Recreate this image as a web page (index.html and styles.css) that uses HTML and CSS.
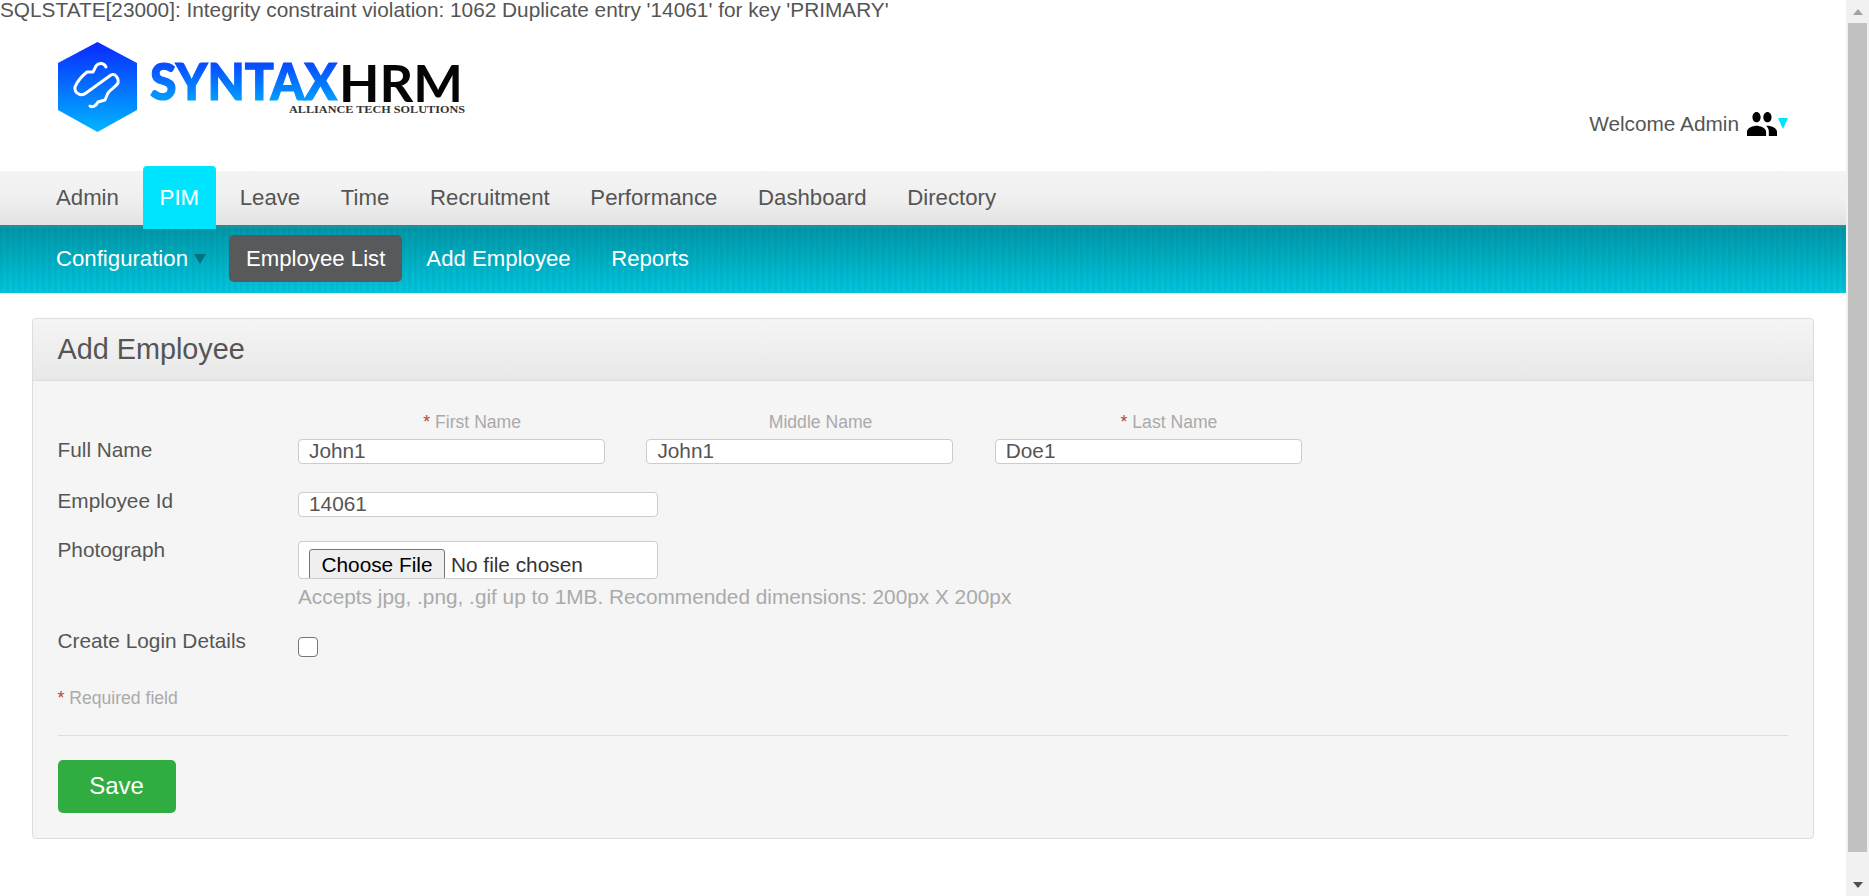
FILE: index.html
```html
<!DOCTYPE html>
<html lang="en">
<head>
    <meta charset="UTF-8">
    <meta name="viewport" content="width=device-width, initial-scale=1.0">
    <title>Add Employee</title>
    <link rel="stylesheet" href="styles.css">
</head>
<body>
    <div class="page">
        <div class="error-line">SQLSTATE[23000]: Integrity constraint violation: 1062 Duplicate entry '14061' for key 'PRIMARY'</div>
        <header class="top-header">
            <svg class="logo" viewBox="0 0 410 92" width="410" height="92" aria-label="Syntax HRM">
                <defs>
                    <linearGradient id="blue-grad" x1="0" y1="0" x2="0" y2="1">
                        <stop offset="0" stop-color="#0a28ff"/>
                        <stop offset="1" stop-color="#00b6ff"/>
                    </linearGradient>
                </defs>
                <polygon points="39.5,0 79,21 79,68 39.5,90 0,68 0,21" fill="url(#blue-grad)"/>
                <path d="M48 25 C46 21 41 20 38 24 L35 30 L29 30 C24 34 19 40 17 45 C16 51 23 55 28 51 L53 33 C57 31 61 36 60 41 C58 45 53 47 50 51 L47 58 L40 60 C38 64 34 66 32 64" fill="none" stroke="#fff" stroke-width="3" stroke-linecap="round" stroke-linejoin="round"/>
                <text class="logo-syntax" x="92" y="58" textLength="187" lengthAdjust="spacingAndGlyphs" fill="url(#blue-grad)">SYNTAX</text>
                <text class="logo-hrm" x="281" y="60" textLength="124" lengthAdjust="spacingAndGlyphs">HRM</text>
                <text class="logo-tag" x="231" y="71" textLength="176" lengthAdjust="spacingAndGlyphs">ALLIANCE TECH SOLUTIONS</text>
            </svg>
            <div class="welcome">
                <span>Welcome Admin</span>
                <svg class="people-icon" viewBox="1 5 22 14" width="30" height="24" preserveAspectRatio="none">
                    <path d="M16 11c1.66 0 2.99-1.34 2.99-3S17.66 5 16 5c-1.66 0-3 1.34-3 3s1.34 3 3 3zm-8 0c1.66 0 2.99-1.34 2.99-3S9.66 5 8 5C6.34 5 5 6.34 5 8s1.34 3 3 3zm0 2c-2.33 0-7 1.17-7 3.5V19h14v-2.5c0-2.33-4.67-3.5-7-3.5zm8 0c-.29 0-.62.02-.97.05 1.16.84 1.97 1.97 1.97 3.45V19h6v-2.5c0-2.33-4.67-3.5-7-3.5z"/>
                </svg>
                <i class="welcome-arrow"></i>
            </div>
        </header>
        <nav class="main-menu">
            <a href="#">Admin</a>
            <a href="#" class="active">PIM</a>
            <a href="#">Leave</a>
            <a href="#">Time</a>
            <a href="#">Recruitment</a>
            <a href="#">Performance</a>
            <a href="#">Dashboard</a>
            <a href="#">Directory</a>
        </nav>
        <nav class="sub-menu">
            <a href="#">Configuration<i class="sub-arrow"></i></a>
            <a href="#" class="active">Employee List</a>
            <a href="#">Add Employee</a>
            <a href="#">Reports</a>
        </nav>
        <section class="panel">
            <div class="panel-head">Add Employee</div>
            <form class="panel-body">
                <div class="form-row name-row">
                    <label class="row-label">Full Name</label>
                    <div class="name-cols">
                        <div class="name-col">
                            <div class="sub-label"><em>*</em> First Name</div>
                            <input type="text" value="John1">
                        </div>
                        <div class="name-col">
                            <div class="sub-label">Middle Name</div>
                            <input type="text" value="John1">
                        </div>
                        <div class="name-col">
                            <div class="sub-label"><em>*</em> Last Name</div>
                            <input type="text" value="Doe1">
                        </div>
                    </div>
                </div>
                <div class="form-row id-row">
                    <label class="row-label">Employee Id</label>
                    <input type="text" class="wide" value="14061">
                </div>
                <div class="form-row photo-row">
                    <label class="row-label">Photograph</label>
                    <div>
                        <input type="file" class="file-box">
                        <div class="hint">Accepts jpg, .png, .gif up to 1MB. Recommended dimensions: 200px X 200px</div>
                    </div>
                </div>
                <div class="form-row login-row">
                    <label class="row-label">Create Login Details</label>
                    <input type="checkbox" class="login-check">
                </div>
                <div class="required"><em>*</em> Required field</div>
                <hr class="divider">
                <button type="button" class="save-btn">Save</button>
            </form>
        </section>
    </div>
    <div class="scrollbar">
        <div class="scroll-btn"><i class="arrow-up"></i></div>
        <div class="scroll-thumb"></div>
        <div class="scroll-rest"></div>
        <div class="scroll-btn"><i class="arrow-down"></i></div>
    </div>
</body>
</html>
```

FILE: styles.css
```css
html, body {
    height: 100%;
}
body {
    font-family: "Liberation Sans", Arial, sans-serif;
    color: #555;
    background: #fff;
    margin: 0;
    display: flex;
    overflow: hidden;
}
.page {
    flex: 1;
    min-width: 0;
}
.error-line {
    font-size: 20.8px;
    line-height: 20px;
    height: 20px;
    white-space: nowrap;
}
.top-header {
    height: 151px;
    box-sizing: border-box;
    display: flex;
    justify-content: space-between;
    padding: 22px 58px 0 58px;
}
.logo-syntax {
    font-family: Lato, sans-serif;
    font-weight: 900;
    font-size: 52px;
    stroke: url(#blue-grad);
    stroke-width: 1.2px;
}
.logo-hrm {
    font-family: Lato, sans-serif;
    font-weight: 700;
    font-size: 52px;
    fill: #050505;
}
.logo-tag {
    font-family: "Liberation Serif", serif;
    font-weight: 700;
    font-size: 11px;
    fill: #333;
}
.welcome {
    display: flex;
    align-items: center;
    height: 24px;
    margin-top: 69px;
    font-size: 20.8px;
}
.welcome span {
    position: relative;
    top: 1px;
}
.people-icon {
    margin: 2px 0 0 8px;
    fill: #000;
}
.welcome-arrow {
    width: 0;
    height: 0;
    margin-left: 1px;
    border-left: 5px solid transparent;
    border-right: 5px solid transparent;
    border-top: 11px solid #00e5ff;
}
.main-menu {
    height: 54px;
    display: flex;
    gap: 7.7px;
    padding-left: 39px;
    background: linear-gradient(#f4f4f4, #f0f0f0 50%, #e2e2e2);
}
.main-menu a {
    position: relative;
    z-index: 2;
    height: 63px;
    margin-top: -5px;
    line-height: 64px;
    padding: 0 16.5px;
    font-size: 22.2px;
    color: #555;
    text-decoration: none;
    border-radius: 4px 4px 0 0;
}
.main-menu a:first-child {
    padding-left: 17px;
}
.main-menu a.active {
    background: #00e5ff;
    color: #fff;
}
.sub-menu {
    box-sizing: content-box;
    border-top: 3px solid #1f8f9c;
    padding-top: 7px;
    height: 58px;
    display: flex;
    align-items: flex-start;
    gap: 7.5px;
    padding-left: 39px;
    background:
        repeating-linear-gradient(90deg, rgba(0, 0, 0, 0.035) 0 3px, transparent 3px 6px),
        linear-gradient(#0097a8, #00c6de);
}
.sub-menu a {
    display: flex;
    align-items: center;
    height: 47px;
    padding: 0 16px 0 17px;
    font-size: 22.2px;
    color: #fff;
    text-decoration: none;
    border-radius: 5px;
}
.sub-menu a:first-child {
    padding-right: 17.5px;
}
.sub-menu a.active {
    background: #58595b;
    padding: 0 16.5px 0 17px;
}
.sub-arrow {
    width: 0;
    height: 0;
    margin-left: 6px;
    margin-right: -2px;
    border-left: 6px solid transparent;
    border-right: 6px solid transparent;
    border-top: 10px solid #00727f;
}
.panel {
    margin: 25px 32px 0 32px;
    background: #f5f5f5;
    border: 1px solid #ddd;
    border-radius: 4px;
}
.panel-head {
    height: 61px;
    line-height: 60px;
    padding-left: 24.5px;
    font-size: 28.8px;
    background: linear-gradient(#f5f5f5, #e8e8e8);
    border-bottom: 1px solid #ddd;
    border-radius: 4px 4px 0 0;
}
.panel-body {
    padding: 31px 25px 25px 24.5px;
}
.form-row {
    display: flex;
    align-items: flex-start;
}
.row-label {
    width: 240.5px;
    flex: none;
    font-size: 20.8px;
    line-height: 24px;
}
input[type="text"] {
    display: block;
    box-sizing: border-box;
    width: 307px;
    height: 25px;
    padding: 0 10px 2px 10px;
    margin: 0;
    font-family: inherit;
    font-size: 20.8px;
    color: #555;
    background: #fff;
    border: 1px solid #ccc;
    border-radius: 4px;
    outline: none;
}
.name-row {
    margin-bottom: 25px;
}
.name-row .row-label {
    padding-top: 26px;
}
.name-cols {
    display: grid;
    grid-template-columns: repeat(3, 348.4px);
}
.sub-label {
    font-size: 17.6px;
    line-height: 20px;
    margin-bottom: 7px;
    color: #aaa;
    text-align: center;
}
em {
    font-style: normal;
    color: #b5482a;
}
.id-row {
    margin-bottom: 21px;
}
input.wide {
    width: 360px;
    margin-top: 3px;
    padding-bottom: 1px;
}
.photo-row {
    margin-bottom: 20px;
}
.file-box {
    display: block;
    box-sizing: border-box;
    width: 360px;
    height: 38px;
    margin-top: 3px;
    padding: 7px 10px 0 10px;
    font-family: inherit;
    font-size: 20.8px;
    color: #333;
    background: #fff;
    border: 1px solid #ccc;
    border-radius: 4px;
    overflow: hidden;
}
.file-box::file-selector-button {
    padding: 3px 11.5px;
    margin-right: 6px;
    font-family: inherit;
    font-size: 20.8px;
    color: #000;
    background: #efefef;
    border: 1px solid #767676;
    border-radius: 3px;
}
.hint {
    margin-top: 6px;
    font-size: 20.8px;
    line-height: 24px;
    color: #aaa;
}
.login-row {
    margin-bottom: 31px;
}
.login-check {
    appearance: none;
    box-sizing: border-box;
    width: 20px;
    height: 20px;
    margin: 8px 0 0 0;
    background: #fff;
    border: 1px solid #767676;
    border-radius: 4px;
}
.required {
    font-size: 17.6px;
    line-height: 20px;
    color: #aaa;
}
.divider {
    margin: 27px 0 24px 0;
    border: none;
    border-top: 1px solid #ddd;
}
.save-btn {
    display: block;
    width: 118px;
    height: 53px;
    padding: 0 0 2px 0;
    font-family: inherit;
    font-size: 24px;
    color: #fff;
    background: #31ac41;
    border: none;
    border-radius: 5px;
    cursor: pointer;
}
.scrollbar {
    width: 23px;
    flex: none;
    display: flex;
    flex-direction: column;
    align-items: center;
    background: #f1f1f1;
}
.scroll-btn {
    height: 23px;
    width: 100%;
    flex: none;
    display: flex;
    align-items: center;
    justify-content: center;
}
.scroll-thumb {
    width: 19px;
    height: 829px;
    background: #c1c1c1;
}
.scroll-rest {
    flex: 1;
}
.arrow-up, .arrow-down {
    width: 0;
    height: 0;
    border-left: 5.5px solid transparent;
    border-right: 5.5px solid transparent;
}
.arrow-up {
    border-bottom: 6px solid #a3a3a3;
}
.arrow-down {
    border-top: 6px solid #505050;
}
```
